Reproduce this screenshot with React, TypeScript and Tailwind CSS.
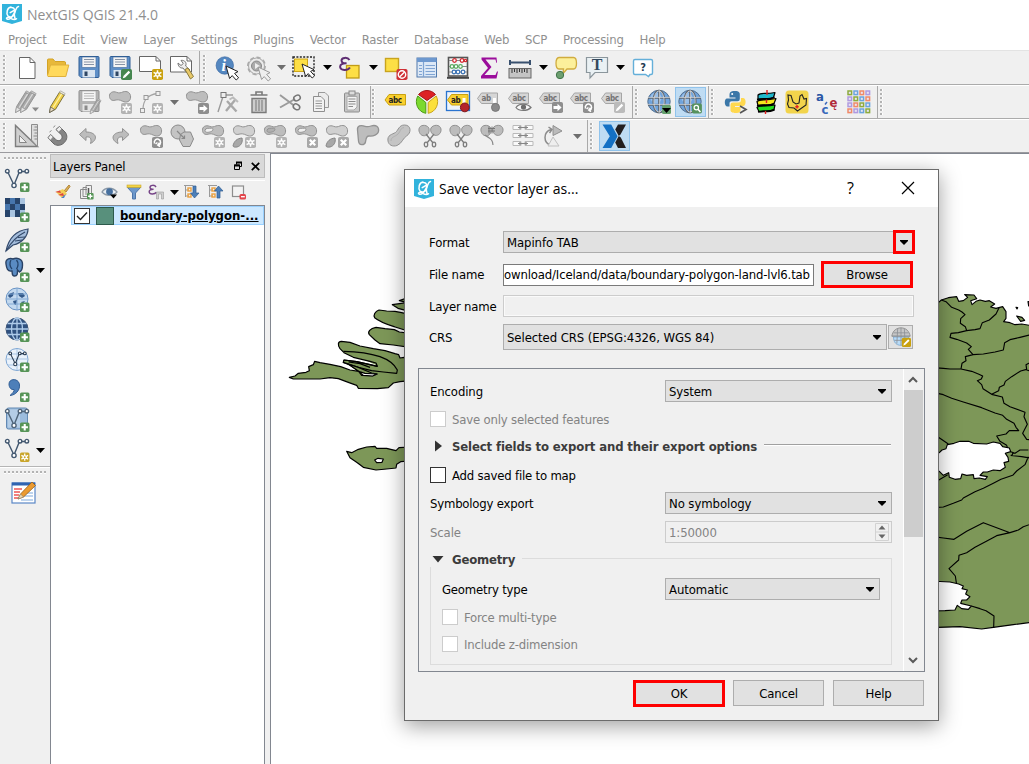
import type { ReactNode } from 'react'

type Kids = { children?: ReactNode }

const G = '#8a8a8a'
const L = '#c4c4c4'

/* ---------- shared icon parts ---------- */

function Icon({ children, w = 'w-[31px]' }: Kids & { w?: string }) {
  return (
    <div className={`flex shrink-0 justify-center ${w}`}>
      <svg width="24" height="24" viewBox="0 0 24 24" className="overflow-visible" fill="none">
        {children}
      </svg>
    </div>
  )
}

function Down({ gray = false }: { gray?: boolean }) {
  return (
    <div className="flex w-[15px] shrink-0 justify-center">
      <svg width="9" height="5" viewBox="0 0 9 5">
        <path d="M0 0H9L4.5 5Z" fill={gray ? '#6e6e6e' : '#000'} />
      </svg>
    </div>
  )
}

function Badge({ kind, fill = '#8e8e8e', x = 13, y = 13, s = 1 }: { kind: string; fill?: string; x?: number; y?: number; s?: number }) {
  return (
    <g transform={`translate(${x} ${y}) scale(${s})`}>
      <rect x="0" y="0" width="11" height="11" rx="1.8" fill={fill} />
      {kind === 'plus' && <path d="M5.5 1.8V9.2M1.8 5.5H9.2" stroke="#fff" strokeWidth="2.4" />}
      {kind === 'star' && (
        <>
          <path d="M5.5 1.3V9.7M1.6 3.3L9.4 7.7M9.4 3.3L1.6 7.7" stroke="#fff" strokeWidth="1.5" />
          <circle cx="5.5" cy="5.5" r="2.4" fill="#fff" />
          <circle cx="5.5" cy="5.5" r="1.1" fill={fill} />
        </>
      )}
      {kind === 'x' && <path d="M2.8 2.8L8.2 8.2M8.2 2.8L2.8 8.2" stroke="#fff" strokeWidth="2.3" />}
      {kind === 'arrow' && <path d="M1.5 4H5.5V1.8L9.6 5.5L5.5 9.2V7H1.5Z" fill="#fff" />}
      {kind === 'rot' && (
        <path d="M2.5 6.5C1.5 3 4.5 1.6 6.5 2.3C9.5 3.4 9 7.6 6.6 8M7.5 5.8L5.8 8L8 9.6M5.4 5.5L3.6 7" stroke="#fff" strokeWidth="1.5" />
      )}
      {kind === 'pen' && <path d="M1.8 9.3L2.6 6.8L7.6 1.8L9.2 3.4L4.2 8.4Z" fill="#fff" />}
      {kind === 'zoom' && (
        <>
          <circle cx="4.8" cy="4.6" r="2.4" stroke="#fff" strokeWidth="1.4" />
          <path d="M6.6 6.4L9.4 9.4" stroke="#fff" strokeWidth="1.8" />
        </>
      )}
    </g>
  )
}

const Cursor = ({ x = 11, y = 10, gray = false }: { x?: number; y?: number; gray?: boolean }) => (
  <path
    transform={`translate(${x} ${y})`}
    d="M0 0L3.6 12.5L6.2 9.6L10.2 14L12.6 11.8L8.6 7.4L12 5.6Z"
    fill={gray ? '#eee' : '#fff'}
    stroke={gray ? '#9a9a9a' : '#222'}
    strokeWidth="1"
  />
)

const Blob = ({ light = false }: { light?: boolean }) => (
  <path
    d="M1.5 6.5C1 2.6 5 .8 8.5 2.3C11 3.4 13 2.8 15 1.9C19 .5 22.6 2.6 22.6 7C22.6 11.5 18.5 13.3 14.5 11.2C11.5 9.8 10 9.4 7 10.2C4 11 1.8 9.6 1.5 6.5Z"
    fill={light ? '#d0d0d0' : '#bdbdbd'}
    stroke="#929292"
  />
)

const Ring = ({ fill = '#f0f0f0' }: { fill?: string }) => (
  <path d="M4 6.4C4.4 3.8 7.4 4.3 10.5 4.2C12.5 4.1 12.3 6.5 10.6 7.3C8 8.5 4 9.2 4 6.4Z" fill={fill} stroke="#929292" />
)

const SmallPart = () => <path d="M1 22C2 17 5 14.5 10 14C11 18 9 22 5 23C3 23.3 1.5 23.2 1 22Z" fill="#a8a8a8" stroke="#858585" />

const Floppy = ({ gray = false }: { gray?: boolean }) => (
  <g>
    <path d="M2 1.5Q2 .5 3 .5H21Q22 .5 22 1.5V20.5Q22 21.5 21 21.5H4L2 19.5Z" fill={gray ? '#b4b4b4' : '#5f8fc7'} stroke={gray ? '#8e8e8e' : '#2f5c94'} />
    <rect x="5" y="1" width="14" height="10.5" fill="#f4f4f4" stroke={gray ? '#a0a0a0' : '#3d6699'} strokeWidth=".6" />
    <path d="M7 3.5H17M7 6H17M7 8.5H17" stroke={gray ? '#b9b9b9' : '#8793a6'} />
    <rect x="5.5" y="14" width="12.5" height="7.5" fill={gray ? '#e4e4e4' : '#d9e4f0'} />
    <rect x="7.5" y="15.5" width="3" height="4.5" fill={gray ? '#8b8b8b' : '#2f4664'} />
  </g>
)

const Pencil = ({ gray = false, dx = 0 }: { gray?: boolean; dx?: number }) => (
  <g transform={`translate(${dx} 0)`}>
    <path d="M4.5 22.5L5.6 16.5L14.5 2.2L19.3 5L10.5 19.3Z" fill={gray ? '#a9a9a9' : '#f0d04a'} stroke={gray ? '#8d8d8d' : '#6f6430'} strokeWidth=".9" />
    <path d="M8 17.8L16.8 3.6" stroke={gray ? '#dcdcdc' : '#fff3a5'} strokeWidth="1.2" />
    <path d="M4.5 22.5L5.5 17L9.6 19.5Z" fill={gray ? '#e3e3e3' : '#e9dcc0'} stroke={gray ? '#999' : '#555'} strokeWidth=".7" />
    <path d="M14.4 2.2L15.5 .8L20.2 3.6L19.3 5Z" fill={gray ? '#c9c9c9' : '#f4f0dd'} stroke="#8a8a8a" strokeWidth=".6" />
  </g>
)

const Label = ({ yellow = false, short = false }: { yellow?: boolean; short?: boolean }) => (
  <g>
    <path d={yellow ? 'M1 12L5 6.5H21.5V17H5Z' : 'M.5 8.5L4.5 3H20.5V13.5H4.5Z'} fill={yellow ? '#f9d02e' : '#d6d6d6'} stroke={yellow ? '#c9a110' : '#a5a5a5'} />
    <text x="4.4" y={yellow ? 14.8 : 11.3} className="font-['DejaVu_Sans_Condensed',sans-serif] text-[8px] font-bold tracking-[-0.3px]" fill={yellow ? '#222' : '#737373'}>
      {short ? 'ab' : 'abc'}
    </text>
  </g>
)

const Globe = ({ main = '#4d86c6', line = '#fff', r = 11 }: { main?: string; line?: string; r?: number }) => (
  <g>
    <circle cx="12" cy="12" r={r} fill={main} stroke="#3e5678" strokeWidth="1" />
    <g stroke={line} strokeWidth="1.3">
      <ellipse cx="12" cy="12" rx={r * 0.5} ry={r} />
      <path d={`M12 ${12 - r}V${12 + r}M${12 - r} 12H${12 + r}M${12 - r * 0.86} ${12 - r * 0.5}H${12 + r * 0.86}M${12 - r * 0.86} ${12 + r * 0.5}H${12 + r * 0.86}`} />
    </g>
  </g>
)

const WebGlobe = () => (
  <g>
    <circle cx="12" cy="11.5" r="11.2" fill="#6fa3dc" stroke="#56718f" />
    <circle cx="9" cy="8" r="5.5" fill="#a9cbef" opacity=".7" />
    <g stroke="#5d656f" strokeWidth="1.7">
      <ellipse cx="12" cy="11.5" rx="5.8" ry="11" />
      <path d="M12 .5V22.5M1 8H23M1 15H23" />
    </g>
    <g stroke="#e6e6e6" strokeWidth=".7">
      <ellipse cx="12" cy="11.5" rx="5.2" ry="10.6" />
      <path d="M12.6 .5V22.5M1 7.4H23M1 14.4H23" />
    </g>
  </g>
)

const VNodes = ({ c = '#42576f' }: { c?: string }) => (
  <g stroke={c} strokeWidth="1.4" fill="#fff">
    <path d="M2.5 3.5L9 17L14.5 3.5H21.5" fill="none" />
    <circle cx="2.3" cy="3.2" r="1.8" />
    <circle cx="15" cy="3.2" r="1.8" />
    <circle cx="21.8" cy="3.2" r="1.8" />
    <circle cx="9" cy="17.5" r="2.1" />
  </g>
)

const Scissors = () => (
  <g stroke="#7d7d7d" strokeWidth="1.3">
    <path d="M8 10L15 19M16 10L9 19" />
    <ellipse cx="8" cy="20.5" rx="1.7" ry="2.3" fill="#eee" />
    <ellipse cx="16" cy="20.5" rx="1.7" ry="2.3" fill="#eee" />
  </g>
)

const TwoLobes = () => (
  <g fill="#bcbcbc" stroke="#929292">
    <path d="M1 7C0 1.5 6 0 9.5 2.5C12 4 11.5 9 9 11C5 13 2 11 1 7Z" />
    <path d="M13 4C15 .5 22 0 23 5C23.6 10 19 12.5 16 11C13.5 9.8 12 7 13 4Z" />
  </g>
)

function QLogo() {
  return (
    <svg width="20" height="20" viewBox="0 0 20 20" fill="none">
      <path d="M0 0H20V17L10 20L0 17Z" fill="#32b3dc" />
      <g stroke="#fff" strokeWidth="1.5" strokeLinecap="round">
        <path d="M9 3C5 3.5 4 9.5 6 12C9 14.4 13 12 13 7.5C13 4.4 11 2.8 8 3.6" />
        <path d="M16.5 2.5C14 2.8 14.2 6 12.2 9C10.5 12 9 15.6 5.6 15.2C3 14.5 5.5 12.6 7.5 13.6C10 15 12 17 14.5 14.8M8.2 8.6L12 6.5M12 9.5L13 14.5" />
      </g>
    </svg>
  )
}

/* ---------- toolbar scaffolding ---------- */

function Handle({ w = 'w-[11.5px]' }: { w?: string }) {
  return (
    <div className={`flex h-[26px] shrink-0 justify-end pr-[5.5px] ${w}`}>
      <svg width="3" height="26" viewBox="0 0 3 26">
        {[0, 4, 8, 12, 16, 20, 24].map((y) => (
          <g key={y}>
            <rect x="1" y={y} width="2" height="2" fill="#fff" />
            <rect x="0" y={y} width="2" height="2" fill="#b3b3b3" />
          </g>
        ))}
      </svg>
    </div>
  )
}

function Sep({ m = 'ml-px' }: { m?: string }) {
  return <div className={`w-px shrink-0 self-stretch bg-[#a9a9a9] ${m}`} />
}

function MainToolbar() {
  return (
    <div className="flex h-[35px] items-center border-t border-b border-t-[#e3e3e3] border-b-[#ababab]">
      <Handle />
      <Icon><path d="M4.5 1.5H15L20 6.5V22.5H4.5Z" fill="#fff" stroke="#666" /><path d="M15 1.5V6.5H20" stroke="#666" /></Icon>
      <Icon><path d="M1.5 19V4Q1.5 3 2.5 3H7L9 5.5H18.5Q19.5 5.5 19.5 7V9" fill="#e8b83a" stroke="#d3a326" /><path d="M1.5 19.5L4.5 9H22.8L19.8 20.5H2Z" fill="#ffd95c" stroke="#dfb03b" /></Icon>
      <Icon><Floppy /></Icon>
      <Icon><Floppy /><Badge kind="pen" fill="#45864f" /></Icon>
      <Icon><path d="M.5 .5H17L21.5 5V15.5H.5Z" fill="#fff" stroke="#666" /><path d="M17 .5V5H21.5" stroke="#666" /><Badge kind="star" fill="#c9a10f" /></Icon>
      <Icon>
        <path d="M.5 .5H17L21.5 5V16H.5Z" fill="#fff" stroke="#666" /><path d="M17 .5V5H21.5" stroke="#666" />
        <path d="M8 7L11 9.5L13.3 7.5L11 4.4C15 3.8 17 7 15.6 10L20 14L16.5 16.5L13 12C10 12.5 8 10 8 7Z" fill="#eee" stroke="#777" />
        <path d="M15 13.5L18 12L23.5 20.5L20.5 23Z" fill="#e9c969" stroke="#8a7a3c" />
      </Icon>
      <Sep />
      <Handle w="w-[12px]" />
      <Icon>
        <circle cx="9.8" cy="9.5" r="8.7" fill="#5487c0" stroke="#3d6ca5" strokeWidth=".7" />
        <text x="6.5" y="15" className="font-['Liberation_Serif',serif] text-[16px] font-bold italic" fill="#fff">i</text>
        <Cursor />
      </Icon>
      <Icon>
        <circle cx="10.5" cy="10" r="8.2" fill="#e9e9e9" stroke="#aaa" strokeWidth="2.5" strokeDasharray="4 2.4" />
        <circle cx="10.5" cy="10" r="8" fill="#ebebeb" stroke="#a9a9a9" />
        <circle cx="10.5" cy="10" r="5" fill="#ababab" stroke="#888" /><path d="M9 7L14 10L9 13Z" fill="#eee" />
        <Cursor x={12} y={11} gray />
      </Icon>
      <Down gray />
      <Icon>
        <rect x="1" y="1" width="21" height="19" stroke="#222" strokeWidth="1.4" strokeDasharray="2 1.4" />
        <rect x="2.5" y="3" width="13" height="12.5" fill="#fddf45" stroke="#cda61a" /><Cursor x={10} y={8} />
      </Icon>
      <Down />
      <Icon>
        <rect x="8.5" y="9.5" width="12.5" height="12.5" fill="#fddf45" stroke="#c19c16" strokeWidth="1.3" />
        <path d="M11.5 4C9.5 .8 3.5 1.4 3.5 4.6C3.5 7 6 7.5 8.5 7.2C4.5 7 2 8.4 2.1 11C2.5 14.6 9.5 15 12 11.5" stroke="#5e2d72" strokeWidth="2" />
      </Icon>
      <Down />
      <Icon>
        <rect x="1.5" y="2.5" width="13" height="13" fill="#fddf45" stroke="#c9a41e" strokeWidth="1.4" />
        <rect x="12.5" y="13" width="11" height="11" rx="1.8" fill="#cf2f35" /><circle cx="18" cy="18.5" r="3.7" stroke="#fff" strokeWidth="1.4" /><path d="M15.5 21L20.6 16" stroke="#fff" strokeWidth="1.4" />
      </Icon>
      <Icon>
        <rect x="2" y="2" width="19.5" height="19" fill="#dce8f6" stroke="#5079ac" /><rect x="2" y="2" width="19.5" height="4" fill="#6d98cf" />
        <path d="M8.5 6V21M4 9.5H7M4 12.5H7M4 15.5H7M4 18.5H7M10.5 9.5H20M10.5 12.5H20M10.5 15.5H20M10.5 18.5H20" stroke="#7fa4d3" strokeWidth="1.2" />
      </Icon>
      <Icon>
        <rect x="2.5" y="1.5" width="19" height="18.5" fill="#f7f7f7" stroke="#555" strokeWidth="1.6" />
        <path d="M3 4.5H21M3 10.5H21M3 16H21" stroke="#888" /><path d="M1 21.8H23" stroke="#444" strokeWidth="2" />
        <g fill="#fff" strokeWidth="1.3"><g stroke="#d22d33"><circle cx="8.5" cy="4.5" r="1.8" /><circle cx="16" cy="4.5" r="1.8" /><circle cx="19.5" cy="4.5" r="1.2" /></g><g stroke="#5daa62"><circle cx="6" cy="10.5" r="1.8" /><circle cx="10" cy="10.5" r="1.8" /><circle cx="14.5" cy="10.5" r="1.8" /></g><g stroke="#3f75b5"><circle cx="8" cy="16" r="1.8" /><circle cx="12" cy="16" r="1.8" /><circle cx="17" cy="16" r="1.8" /></g></g>
      </Icon>
      <Icon><path d="M19.3 6.8L18.5 3.5H8.5L14.5 11L7.5 19H18.5L20 15.5H21L19.5 22.5H4V20L11 12L4.5 3.5V1.5H19.5L20 6.8Z" fill="#9b0d9b" /></Icon>
      <Icon>
        <path d="M2 6.5H22M2 4V9M22 4V9" stroke="#39516f" strokeWidth="2" />
        <rect x="1" y="12.5" width="22" height="9.5" fill="#c4c4c4" stroke="#666" /><path d="M4 13V17M6.5 13V16M9 13V17M11.5 13V16M14 13V17M16.5 13V16M19 13V17" stroke="#333" />
      </Icon>
      <Down />
      <Icon>
        <path d="M5 1.5H19.5C23.5 1.5 23.5 13 19.5 13H13L9 17.5L9.5 13H5C1 12.8 1 1.8 5 1.5Z" fill="#fcf09b" stroke="#d0ac3f" strokeWidth="1.3" />
        <circle cx="6" cy="19" r="3.7" fill="#6c9e6f" stroke="#41744a" />
      </Icon>
      <Icon>
        <path d="M1.5 1.5H22.5V16.5H10L5 22V16.5H1.5Z" fill="#eaf1f4" stroke="#8b969c" strokeWidth="1.2" />
        <text x="6.7" y="14.3" className="font-['Liberation_Serif',serif] text-[16px] font-bold" fill="#34495e">T</text>
      </Icon>
      <Down />
      <Icon>
        <path d="M4 3.5H20Q21.5 3.5 21.5 5V17Q21.5 18.5 20 18.5H19L17.5 20.5L14.5 18.5H4Q2.5 18.5 2.5 17V5Q2.5 3.5 4 3.5Z" fill="#fff" stroke="#64afd9" strokeWidth="1.4" />
        <text x="9.2" y="15" className="font-['DejaVu_Sans_Condensed',sans-serif] text-[11px] font-bold" fill="#243b53">?</text>
      </Icon>
    </div>
  )
}

function EditToolbar() {
  return (
    <div className="flex h-[34px] items-center border-t border-b border-t-white border-b-[#ababab]">
      <Handle />
      <Icon><Pencil gray dx={-4} /><Pencil gray dx={1} /><path d="M17 17.5H24L20.5 21.5Z" fill="#8a8a8a" /></Icon>
      <Icon><Pencil dx={-1} /></Icon>
      <Icon><Floppy gray /><g transform="translate(10 8) scale(.7)"><Pencil gray /></g></Icon>
      <Icon><Blob /><Badge kind="star" fill="#b3b3b3" /></Icon>
      <Icon>
        <path d="M4 20C4 10 8 5 18 3.5" stroke="#a4a4a4" strokeWidth="1.3" />
        <g fill="#eee" stroke="#9a9a9a"><rect x="1.5" y="18.5" width="4" height="4" /><rect x="5" y="5.5" width="4" height="4" /><rect x="17" y="1.5" width="4" height="4" /></g>
        <Badge kind="star" fill="#b3b3b3" />
      </Icon>
      <Down gray />
      <Icon><Blob /><Badge kind="arrow" /></Icon>
      <Icon>
        <path d="M2 22L7.5 5M9 5H17" stroke="#9a9a9a" strokeWidth="1.4" /><rect x="5" y="2.5" width="5" height="5" fill="#eee" stroke="#777" />
        <path d="M11 11L20.5 21.5M19 10L10 21" stroke="#a8a8a8" strokeWidth="2.4" /><path d="M13.5 9.5L17 7.5L22 12" stroke="#bbb" strokeWidth="2" />
      </Icon>
      <Icon>
        <path d="M9 4.5V2H15V4.5M3.5 5H20.5" stroke="#7a7a7a" strokeWidth="1.6" /><path d="M5 8.5H19V22.5H5Z" fill="#cdcdcd" stroke="#7a7a7a" strokeWidth="1.4" /><path d="M9 10V21M12 10V21M15 10V21" stroke="#8a8a8a" strokeWidth="1.3" />
      </Icon>
      <Icon>
        <path d="M2 5L16 15.5M2 17.5L17 9" stroke="#9b9b9b" strokeWidth="2" /><ellipse cx="19" cy="8" rx="3.4" ry="2.6" transform="rotate(-25 19 8)" stroke="#777" strokeWidth="1.5" /><ellipse cx="18.5" cy="16.8" rx="3.4" ry="2.6" transform="rotate(30 18.5 16.8)" stroke="#777" strokeWidth="1.5" />
      </Icon>
      <Icon>
        <path d="M9.5 2.5H16L19.5 6V17.5H9.5Z" fill="#ececec" stroke="#999" /><path d="M4.5 6.5H12L15.5 10V21.5H4.5Z" fill="#f2f2f2" stroke="#8f8f8f" /><path d="M6.5 11H13M6.5 13.5H13M6.5 16H13M6.5 18.5H13" stroke="#999" />
      </Icon>
      <Icon>
        <rect x="4.5" y="3" width="15" height="19" rx="1" fill="#c8c8c8" stroke="#8d8d8d" /><rect x="9" y="1" width="6" height="4" fill="#ddd" stroke="#888" /><path d="M7 6.5H17V17L14 20H7Z" fill="#f3f3f3" stroke="#aaa" /><path d="M8.5 9H15.5M8.5 11.5H15.5M8.5 14H15.5M8.5 16.5H13" stroke="#8b8b8b" />
      </Icon>
      <Sep m="ml-[2px]" />
      <Handle w="w-[10px]" />
      <Icon><g transform="translate(0 -2)"><Label yellow /></g></Icon>
      <Icon>
        <path d="M12 10.5L3.5 4.5C8 -.8 16 -.8 20.5 4.5Z" fill="#dd2225" stroke="#a31519" />
        <path d="M10.8 12.5L2.8 6C-1 13 3 22 10.8 23.3Z" fill="#7cd92f" stroke="#4f9d17" /><path d="M13.2 12.5L21.2 6C25 13 21 22 13.2 23.3Z" fill="#fbe03c" stroke="#caa61c" />
      </Icon>
      <Icon>
        <rect x=".5" y="1.5" width="23" height="19" fill="#eef4fa" stroke="#2a74d0" strokeWidth="1.3" /><g transform="translate(.5 -2)"><Label yellow short /></g>
        <path d="M18 8V14" stroke="#fff" strokeWidth="3" /><circle cx="18.8" cy="17.4" r="4.4" fill="#b5252a" stroke="#7d171b" />
      </Icon>
      <Icon><Label short /><path d="M17.5 8V13" stroke="#fff" strokeWidth="3" /><circle cx="18.5" cy="17.4" r="4" fill="#8b8b8b" stroke="#777" /></Icon>
      <Icon><Label /><path d="M8 17.5C11 13 19 13 23 17.5C19 21.5 11 21.5 8 17.5Z" fill="#f7f7f7" stroke="#777" strokeWidth="1.2" /><circle cx="15.5" cy="17.1" r="2.6" fill="#6d6d6d" /></Icon>
      <Icon><Label /><Badge kind="arrow" y={12} /></Icon>
      <Icon><Label /><Badge kind="rot" y={12} /></Icon>
      <Icon><Label /><Badge kind="pen" fill="#bbb" y={12} /></Icon>
      <Sep m="ml-[3px]" />
      <Handle w="w-[11px]" />
      <Icon><WebGlobe /><rect x="15" y="15" width="9" height="9" rx="1.5" fill="#64a06c" /><path d="M15 18H24L19.5 23Z" fill="#000" /></Icon>
      <div className="flex h-[30px] w-[31px] shrink-0 items-center border border-[#90c3ec] bg-[#bfdcf3]">
        <Icon w="w-[29px]"><WebGlobe /><Badge kind="zoom" fill="#55915d" s={0.9} x={14} y={13.5} /></Icon>
      </div>
      <Sep m="ml-[2px]" />
      <Handle w="w-[11px]" />
      <Icon>
        <path d="M12 1C7 1 6.5 3 6.5 5V7.5H12.5V8.5H4C1 8.5 1 16.5 4.5 16.5H6.5V13Q6.5 11.3 8.5 11.3H14.5Q16.8 11.3 16.8 9V4C16.8 1.5 14 1 12 1Z" fill="#3b77a8" />
        <path d="M12.5 23C17 23 17.5 21.5 17.5 19V17H12V16H20C23.5 16 23.5 8 20 8H18V10.5Q18 12.6 15.5 12.6H10Q7.5 12.6 7.5 15V20C7.5 22.3 10 23 12.5 23Z" fill="#ffd84e" />
        <circle cx="9.2" cy="4" r="1" fill="#fff" /><path d="M17 16L23 19.5L17 23" stroke="#555" strokeWidth="1.7" />
      </Icon>
      <Icon>
        <g stroke="#000" strokeWidth="1.2" strokeLinejoin="round"><path d="M3 17.5C6 14.5 10 17 21 15L20 19.5C15 22.5 10 20.5 5 21.5Z" fill="#28dd22" /><path d="M3 11.5C6 8.5 10 11 22 8.5L20 13.5C15 16.5 10 14.5 4 15.5Z" fill="#f6e81d" /><path d="M4 5C7 2 11 4.5 21 2.5L19.5 7.5C15 10 10 8 4 9.5Z" fill="#20b8cc" /></g>
        <path d="M3 9.5C9 8 15 10 20.5 7.2M3 15.8C9 14.4 15 16.5 20.5 13.5M4 21.8C9 20.6 15 22.5 20.5 19.6" stroke="#000" strokeWidth="1.8" />
        <path d="M13 0V5M12.5 9.5V13M11.5 21V24" stroke="#e02020" strokeWidth="1.4" />
      </Icon>
      <Icon><rect x=".5" y=".5" width="23" height="23" rx="3.5" fill="#f2d44c" /><path d="M3 5L6 5.5L8 12L11 14L14 13L15 6L17 4.5L19 9L21.5 8.5L21 15L12.5 21L9 18L4 17.5L2.5 14L3.5 10Z" stroke="#222" strokeWidth="1.1" /><path d="M12 15V18.5M10.3 16.8H13.7" stroke="#e32222" strokeWidth="1.4" /></Icon>
      <Icon>
        <g className="font-['DejaVu_Sans_Condensed',sans-serif] text-[13px] font-bold"><text x="0" y="10.5" fill="#2b56a5">a</text><text x="5.5" y="24" fill="#3a69ba">c</text><text x="13.5" y="17" fill="#b02a3a">ę</text></g><path d="M9 14.5L11 12" stroke="#3a69ba" strokeWidth="1.5" />
      </Icon>
      <Icon>
        {['#8cab3e', '#6ba4dc', '#f08a68', '#b09ae0', '#b09ae0', '#8cab3e', '#6ba4dc', '#f08a68', '#b09ae0', '#f08a68', '#8cab3e', '#6ba4dc', '#f08a68', '#b09ae0', '#6ba4dc', '#8cab3e'].map((c, i) => (
          <rect key={i} x={1 + (i % 4) * 6} y={1 + Math.floor(i / 4) * 6} width="3.6" height="3.6" fill="#e8e4f0" stroke={c} strokeWidth="1.5" />
        ))}
      </Icon>
      <Sep m="ml-[2px]" />
      <Handle w="w-[11px]" />
    </div>
  )
}

function DigitizeToolbar() {
  return (
    <div className="flex h-[34px] items-center border-t border-b border-t-white border-b-[#9b9b9f]">
      <Handle />
      <Icon><path d="M0.5 1.5V22.5H22.5Z" fill="#cfcfcf" stroke="#7d7d7d" strokeWidth="1.4" /><path d="M4.5 11.5V18.5H11.5Z" fill="#f0f0f0" stroke="#888" /><path d="M16.5 .5H22.5V22.5L16.5 16Z" fill="#ddd" stroke="#8d8d8d" /><path d="M19.5 3H22M18.5 6H22M19.5 9H22M18.5 12H22M19.5 15H22" stroke="#888" /></Icon>
      <Icon><path d="M4.5 10.5L9.5 15.2C13 19 18.5 14.5 15 10.5L10 5.5L13.5 2.5L19 8C25 15 15 25 8 20L2 14Z" fill="#858585" stroke="#666" /><path d="M10 5.5L13.5 2.5L16 5L12.7 8ZM4.5 10.5L7.3 13L4.5 16.3L2 13.8Z" fill="#efefef" stroke="#888" /><path d="M7.5 3.5L9 1.5M5.5 6.5L3.5 8" stroke="#888" /></Icon>
      <Icon><path d="M9 4.5L2.5 10.5L9 16.5V13C13 12.5 15 14 13.5 19.5C22 15 19 8 9 8Z" fill="#bdbdbd" stroke="#929292" /></Icon>
      <Icon><path d="M14.5 4.5L21 10.5L14.5 16.5V13C10.5 12.5 8.5 14 10 19.5C1.5 15 4.5 8 14.5 8Z" fill="#bdbdbd" stroke="#929292" /></Icon>
      <Icon><Blob /><Badge kind="rot" /></Icon>
      <Icon><circle cx="8" cy="8" r="7" fill={L} stroke={G} /><path d="M10.5 10.5L14 8H20.5L23.5 15L20 22.5H13L9.5 16Z" fill={L} stroke={G} /><path d="M7 7L14.5 14.5M11.5 14.5H14.5V11.5" stroke="#888" strokeWidth="1.2" /></Icon>
      <Icon><Blob /><Ring /><Badge kind="star" fill="#b3b3b3" /></Icon>
      <Icon><Blob light /><SmallPart /><Badge kind="star" fill="#b3b3b3" /></Icon>
      <Icon><Blob /><Ring fill="#b0b0b0" /><Badge kind="star" fill="#b3b3b3" /></Icon>
      <Icon><Blob /><Ring /><Badge kind="x" fill="#a8a8a8" /></Icon>
      <Icon><Blob light /><SmallPart /><Badge kind="x" fill="#a8a8a8" /></Icon>
      <Icon><path d="M1.5 6C1 1.5 5 .8 9 2.3C11 3 13 2.8 15 2C20 .5 23 2.6 22.6 7C22 11 17 12.5 13 12C10 12 10 15 9.5 18C8.5 21.5 3 22 2.5 17Z" fill="#bdbdbd" stroke="#929292" strokeWidth="1.3" /></Icon>
      <Icon><path d="M1 17C0 11 5 10.5 8.5 8.5C11.5 6 12 1 17.5 1C24.5 1 24.5 9 19.5 12C16 14 15 19.5 10 21.5C5.5 23 1.6 21 1 17Z" fill="#c4c4c4" stroke="#929292" /><path d="M4 17C4 12.5 8 13 11 10C14 7 13 4 17 3.6" stroke="#b0b0b0" /></Icon>
      <Icon><TwoLobes /><Scissors /></Icon>
      <Icon><TwoLobes /><Scissors /></Icon>
      <Icon><TwoLobes /><path d="M8 4.5H15M8 7H15M9 2.5V9.5M12 2.5V9.5" stroke="#777" /><path d="M5 11C8 14 13 14 13 21" stroke="#888" strokeWidth="1.2" /></Icon>
      <Icon>
        <path d="M2 1.5H10V5.5H2ZM14 1.5H22V5.5H14ZM2 9.5H10V13.5H2ZM14 9.5H22V13.5H14ZM2 17.5H10V21.5H2ZM14 17.5H22V21.5H14Z" fill="#fafafa" stroke="#b9b9b9" />
        <path d="M7 3.5H17M7 11.5H17M7 19.5H17M9 2V5M15 2V5M9 10V13M15 10V13M9 18V21M15 18V21" stroke="#858585" strokeWidth="1.2" />
      </Icon>
      <Icon><path d="M9 21C1 19 1 8 9 5.5M6.5 3L10 5.5L7.5 9" stroke="#8b8b8b" strokeWidth="1.5" /><path d="M11 1.5L20 7L11 11.5Z" fill="#bbb" stroke="#909090" /><path d="M11 13L17 22H6Z" fill="#eee" stroke="#c0c0c0" /></Icon>
      <Down gray />
      <Sep m="ml-[2px]" />
      <Handle w="w-[11px]" />
      <div className="flex h-[30px] w-[31px] shrink-0 items-center border border-[#90c3ec] bg-[#bfdcf3]">
        <Icon w="w-[29px]"><path d="M16 .5H24L18.5 10.5L16.8 12L13.2 5.5ZM18.8 13.5L24 24H16L13.2 18.5L16.8 12Z" fill="#231f20" /><path d="M.5 .5H9.2L15.6 12.2L9.2 24H.5L7.8 12.2Z" fill="#1470c4" /></Icon>
      </div>
    </div>
  )
}

/* ---------- left bar ---------- */

const HDots = () => (
  <svg width="43" height="3" viewBox="0 0 43 3">
    {[0, 4, 8, 12, 16, 20, 24, 28, 32, 36, 40].map((x) => (
      <g key={x}><rect x={x} y="1" width="2" height="2" fill="#fff" /><rect x={x} y="0" width="2" height="2" fill="#b3b3b3" /></g>
    ))}
  </svg>
)

function SideRow({ children, arrow = false }: Kids & { arrow?: boolean }) {
  return (
    <div className="flex h-[30px] items-center pl-[2px]">
      <Icon w="w-[30px]">{children}</Icon>
      {arrow && <div className="ml-px flex"><Down /></div>}
    </div>
  )
}

const PLUS = <Badge kind="plus" fill="#569457" x={15} y={14.5} s={0.86} />

function SideBar() {
  return (
    <div className="flex w-[50px] shrink-0 flex-col">
      <div className="flex h-[12px] justify-center pt-[4px]"><HDots /></div>
      <SideRow><VNodes />{PLUS}</SideRow>
      <SideRow>
        <rect x="0" y="0" width="20" height="19" fill="#a9c4e0" /><path d="M0 0H5V6H0ZM10 0H15V6H10ZM15 6H20V12H15ZM5 6H10V12H5ZM0 12H5V19H0ZM10 12H15V19H10Z" fill="#27446a" /><path d="M5 0H10V6H5ZM0 6H5V12H0ZM10 6H15V12H10Z" fill="#4776ad" />{PLUS}
      </SideRow>
      <SideRow><path d="M1 23C3 13 8 3 23 1C23 7 18 15 8 17Z" fill="#a4bddc" stroke="#33496a" strokeWidth="1.2" /><path d="M1 23C5 16 10 9 20 4M13 9.5L20 9M10 13L17 12" stroke="#33496a" strokeWidth="1.2" />{PLUS}</SideRow>
      <SideRow arrow>
        <path d="M1 6C0 0 6 0 8 1C11 -.5 18 0 17.5 7C17.5 10 16.5 13 14.5 14L12.5 12C12.5 16 12.5 18 9.5 18C6.5 18 7.5 15 7 13C2.5 14 1.5 10 1 6Z" fill="#5a8bc2" stroke="#2a4264" strokeWidth="1.4" /><path d="M6 2C4 5 5 9 7 11M11.5 2C14 5 13 9 11.5 11" stroke="#24436a" strokeWidth="1.3" />{PLUS}
      </SideRow>
      <SideRow>
        <circle cx="12" cy="11" r="11" fill="#c3d9ef" stroke="#6a94c4" /><path d="M3 8C5 4 8 5 9 4L8 8L5 10ZM13 5L18 5L20 8L17 10L14 8ZM8 13L12 12L11 17L9 16ZM16 14L20 13L18 16Z" fill="#33598a" /><path d="M1 11H23M12 0V22M3 6H21M3 16H21" stroke="#7ea6d3" strokeWidth=".9" />{PLUS}
      </SideRow>
      <SideRow><g transform="translate(0 -1)"><Globe main="#2f5180" line="#aecbea" /></g>{PLUS}</SideRow>
      <SideRow><circle cx="12" cy="11.5" r="11" fill="#eaf2fb" stroke="#7ea6d3" /><path d="M1 11H23M12 1V22M3 6H21M3 17H21" stroke="#a9c6e5" /><g transform="translate(3.5 3) scale(.75)"><VNodes c="#26384e" /></g>{PLUS}</SideRow>
      <SideRow><path d="M4 6C4 0 14 0 14.5 7C15 12 11 17 5 17.5C8 15 9.5 13 9 11.5C6 12 4 9.5 4 6Z" fill="#4d7fb9" stroke="#335f96" />{PLUS}</SideRow>
      <SideRow><rect x="1.5" y="0" width="21" height="21" rx="2" fill="#9cbcdd" stroke="#6389b3" /><rect x="3" y="1.5" width="12" height="18" fill="#c4d8ec" opacity=".6" /><VNodes c="#4f6479" />{PLUS}</SideRow>
      <SideRow arrow><VNodes /><Badge kind="star" fill="#c9a52b" x={15} y={14.5} s={0.86} /></SideRow>
      <div className="mt-px h-px bg-[#b5b5b5]" />
      <div className="flex h-[10px] justify-center border-t border-white pt-[3px]"><HDots /></div>
      <div className="flex h-[32px] items-center pl-[8px]">
        <Icon>
          <rect x="0" y="2" width="23" height="20" fill="#fff" stroke="#5b87c6" strokeWidth="1.2" /><rect x="0" y="1.5" width="23" height="3" fill="#2f63b0" /><path d="M2 8H10M2 11H8M2 14H7M2 17H7" stroke="#e55" strokeWidth="1.3" /><path d="M12 12H21M12 15H21M9 19H21" stroke="#a9c6e8" strokeWidth="1.3" />
          <path d="M6 18L8.5 13L20 1L23.5 4.5L11.5 16Z" fill="#eb9a30" stroke="#96601b" strokeWidth=".8" /><path d="M6 18L8.5 13L11.5 16Z" fill="#f1d9ac" stroke="#777" strokeWidth=".5" />
        </Icon>
      </div>
    </div>
  )
}

/* ---------- layers panel ---------- */

function Mini({ children }: Kids) {
  return (
    <svg width="16" height="16" viewBox="0 0 16 16" fill="none" className="shrink-0 overflow-visible">{children}</svg>
  )
}

function LayersPanel() {
  return (
    <div className="flex w-[215px] shrink-0 flex-col pt-px">
      <div className="flex h-[24px] items-center border border-[#bcbcbc] bg-[#d9d9d9] pl-[2px] text-black">
        <span className="grow">Layers Panel</span>
        <svg width="10" height="10" viewBox="0 0 10 10" fill="none" className="mr-[8px]"><path d="M3.5 3.5V1.5H8.5V5.5H6.5M1.5 4H6.5V8.5H1.5Z" stroke="#000" /><path d="M3 1.5H9M1 4.5H7" stroke="#000" strokeWidth="2" /></svg>
        <svg width="9" height="9" viewBox="0 0 9 9" fill="none" className="mr-[4px]"><path d="M.8 .8L8.2 8.2M8.2 .8L.8 8.2" stroke="#000" strokeWidth="1.7" /></svg>
      </div>
      <div className="mt-[2px] flex h-[25px] items-center gap-[7.5px] border-t border-white pb-[2px] pl-[5px]">
        <Mini><path d="M9 7L14 1L15 2.5L11 8Z" fill="#ddb155" stroke="#b28435" /><path d="M1 8L8 5L12 10L7 14Z" fill="#f3cf55" /><path d="M0 8L5 6.5L6 9ZM3 11L8 9L9 12Z" fill="#de4545" /><path d="M6 14L11 10L9 14Z" fill="#4c80c8" /></Mini>
        <Mini><path d="M1.5 5.5H8M1.5 5.5V14.5H8M4 3.5V12.5H10M4 3.5H8M7 1.5H12.5V10M7 1.5V11" stroke="#8a8a8a" /><path d="M9.5 9V4" stroke="#555" strokeWidth="1.5" /><Badge kind="plus" fill="#569457" x={8} y={9} s={0.6} /></Mini>
        <Mini><path d="M0 8C3 3 11 3 15 8C11 12.5 4 12.5 0 8Z" fill="#e9eef3" stroke="#8b98a6" strokeWidth="1.3" /><circle cx="7.5" cy="7.7" r="3.4" fill="#47709f" /><path d="M8 10.5H15L11.5 14.5Z" fill="#000" /></Mini>
        <Mini><path d="M1 3H15L9.5 9V15H6.5V9Z" fill="#6d98cb" stroke="#4d76aa" /><rect x="1" y="1" width="14" height="2.4" fill="#f2d345" stroke="#cba92b" strokeWidth=".6" /></Mini>
        <Mini><path d="M7 3C5.5 .5 1 1 1 3.5C1 5 3 5.5 4.5 5.3C2 5.2 0 6 .2 8C.5 10.5 5.5 10.6 7.5 8.3" stroke="#764487" strokeWidth="1.5" /><path d="M7.5 8H14.5V15H12.5V10H9.5V15H7.5Z" fill="#d0d0d0" stroke="#999" strokeWidth=".6" /></Mini>
        <div className="ml-[-6px] mr-[-5px] flex"><Down /></div>
        <Mini><path d="M1.5 1V13M0 1.5H9M2 6H5M2 12H5" stroke="#999" /><rect x="4" y="4" width="3" height="3" stroke="#eca03d" strokeWidth="1.4" /><rect x="4" y="10" width="3" height="3" stroke="#eca03d" strokeWidth="1.4" /><path d="M9 2H12V9H15L10.5 14L6.5 9H9Z" fill="#4c7fb8" stroke="#2f5d92" strokeWidth=".7" /></Mini>
        <Mini><path d="M1.5 1V13M0 1.5H9M2 6H5M2 12H5" stroke="#999" /><rect x="4" y="4" width="3" height="3" stroke="#eca03d" strokeWidth="1.4" /><rect x="4" y="10" width="3" height="3" stroke="#eca03d" strokeWidth="1.4" /><path d="M9 14H12V7H15L10.5 2L6.5 7H9Z" fill="#4c7fb8" stroke="#2f5d92" strokeWidth=".7" /></Mini>
        <Mini><rect x="1.5" y="2" width="11" height="10.5" fill="#f3f3f3" stroke="#8d8d8d" strokeWidth="1.2" /><rect x="8.5" y="10" width="6.5" height="5.5" rx="1.5" fill="#e2454b" /><path d="M10 12.7H13.8" stroke="#fff" strokeWidth="1.3" /></Mini>
      </div>
      <div className="flex grow flex-col border border-b-0 border-[#828790] bg-white">
        <div className="ml-[20px] flex h-[19px] items-center border border-[#99d1ff] bg-[#cce8ff] pl-[2px]">
          <svg width="16" height="16" viewBox="0 0 16 16" fill="none"><rect x=".5" y=".5" width="15" height="15" fill="#fff" stroke="#333" /><path d="M3 8L6.5 11.5L13 4.5" stroke="#222" strokeWidth="1.4" /></svg>
          <span className="ml-[6px] h-[18px] w-[18px] border border-[#2d5a4c] bg-[#58907c]" />
          <span className="ml-[6px] font-bold tracking-normal text-black underline">boundary-polygon-...</span>
        </div>
      </div>
    </div>
  )
}

/* ---------- map ---------- */

function MapCanvas() {
  return (
    <div className="flex min-w-0 grow border-l border-t border-[#828790] bg-white">
      <svg width="758" height="610" viewBox="271 154 758 610" fill="none" strokeLinejoin="round">
        <g transform="translate(270 270) scale(.33333)" fill="#7d9758" stroke="#000" strokeWidth="3.6">
          <path d="M410 84L388 92L410 97ZM410 98L367 104L384 115L410 122Z" />
          <path d="M420 134L395 128L375 124L350 123L327 120C315 124 309 136 314 143C325 152 345 161 370 169C385 174 396 178 420 184Z" />
          <path d="M420 190L388 186L373 179L345 176L318 172C300 175 292 186 298 194L315 210L330 221L370 225L420 232Z" />
          <path d="M58 322L75 318L85 310L108 307L118 302L116 290L130 284L134 274L150 278L180 283L212 290L240 300L266 304L240 285L220 277L222 270L240 272L222 248L210 236C202 225 204 214 214 214L240 217L270 228L310 236L345 242L375 251L386 254L390 264L402 262L420 278V332L390 335L370 339L355 353L322 356L265 355L260 346L235 337L205 326L180 323L150 327L70 327Z" />
          <path d="M222 248L250 262L280 268L318 285L322 289L300 284L260 275L222 270L214 262Z" fill="#fff" stroke="none" />
          <path d="M220 244C260 245 300 250 330 260C355 269 375 286 382 300L380 310L340 306L305 302L265 292L220 277L222 270L260 275L300 284L322 289L318 279L300 274L250 262L222 248" />
          <path d="M222 270L260 275L300 284L322 289M236 276L270 281L300 292" fill="none" />
          <path d="M234 282L265 292L305 309L322 312L308 317L275 316L266 304Z" />
          <path d="M266 304L285 310L320 312L308 318L280 316Z" fill="#fff" />
          <path d="M230 544L245 548L265 538L290 531L315 529L320 535L350 535L378 542L387 533L420 531V573L392 575L380 583L378 594L350 597L318 600L280 592L262 578L240 563Z" />
          <path d="M314 570L324 565L340 567L336 577L320 578Z" fill="#fff" />
        </g>
        <g transform="translate(900 270) scale(.33333)" stroke="#000" strokeWidth="3.4">
          <path fill="#7d9758" d="M90 100L115 98L124 90L145 83L170 80L176 94L190 92L203 82L194 74L222 75L230 86L212 92L216 104L228 94L240 90L256 94L268 92L284 102L272 111L288 115L308 110L318 125L318 145L311 155L330 158L345 164L365 162L400 168V1056L340 1064L280 1072L245 1077L180 1070L90 1073Z" />
          <path fill="#7d9758" d="M350 138L366 142L374 151L362 154ZM348 112L353 113L351 117Z" />
          <path fill="#222" d="M384 95L392 94V106L386 108Z" />
          <path d="M124 90L138 95L155 112L176 120L186 126L195 134L182 146L181 160L196 170L200 182L225 179L240 176L247 158L268 150L288 132L298 112M200 182L175 188L153 190L150 202L170 208L200 219L214 230L205 238L219 254L250 252L285 246L310 240L314 218L330 209L360 202L400 192M219 254L196 260L198 272L186 280L183 297M100 293L130 295L150 297L183 297L215 304L235 312L248 318L244 327L232 332L245 344L249 356L275 373L296 362L298 352L312 345L316 334L335 320L362 303L380 298L378 284L400 272M380 300L400 305M275 373L307 381L312 400L330 410L375 427L372 440L382 463L368 490L380 508L400 510M100 367L130 374L155 385L190 396L245 413L285 429L308 436L320 448L342 460L348 472L356 482L328 482L318 492L290 498L300 514L320 526L322 532M322 532L332 545L345 550L360 540L385 540M332 556L365 560L400 566M340 546L336 556M100 492L122 506L145 522M385 560L375 584L350 603L338 616L303 628L280 640L250 655L225 665L190 684L185 690L160 700L130 711L100 713M100 640L143 614M100 800L130 804L162 808L200 784L250 758L330 788L355 780L370 770L400 760M330 788L290 797L262 812L225 832L200 848L177 856L176 870L147 896L166 918L170 945M214 1008L240 1016L258 1022L282 1038L281 1074" />
          <path fill="#fff" d="M90 552L118 548L126 540L138 536L142 524L162 520L180 514L206 514L220 520L260 522L280 516L300 520L308 530L328 534L332 545L316 550L324 562L326 574L312 578L316 592L300 602L280 600L262 606L250 606L240 616L262 620L256 628L238 624L222 626L220 614L200 616L186 612L182 626L165 628L148 622L146 608L130 616L118 604L90 598Z" />
          <path fill="#fff" d="M90 933L150 936L176 942L190 948L186 956L202 960L197 972L210 980L200 990L186 990L182 1000L214 1008L205 1018L185 1016L172 1006L165 1020L135 1022L90 1023Z" />
        </g>
      </svg>
    </div>
  )
}

/* ---------- dialog ---------- */

const Tri = () => (
  <svg width="8" height="5" viewBox="0 0 8 5" className="mr-[5px] shrink-0"><path d="M0 0H8V1L4 5L0 1Z" fill="#000" /></svg>
)

function Combo({ text, box, red = false }: { text: string; box: string; red?: boolean }) {
  return (
    <div className={`flex shrink-0 items-center border border-[#adadad] bg-[#e1e1e1] pl-[3px] tracking-[-0.08px] ${box}`}>
      <span className="grow">{text}</span>
      {red ? (
        <span className="-mr-[2px] flex h-[24px] w-[22px] shrink-0 items-center justify-center border-[3px] border-[#fe0000]">
          <svg width="8" height="5" viewBox="0 0 8 5"><path d="M0 0H8V1L4 5L0 1Z" fill="#000" /></svg>
        </span>
      ) : (
        <Tri />
      )}
    </div>
  )
}

function Check({ label, on = false }: { label: string; on?: boolean }) {
  return (
    <div className={`flex h-[16px] items-center tracking-[-0.19px] ${on ? 'text-black' : 'text-[#838383]'}`}>
      <span className={`h-[16px] w-[16px] border bg-white ${on ? 'border-[#333]' : 'border-[#cccccc]'}`} />
      <span className="ml-[6px]">{label}</span>
    </div>
  )
}

function Button({ label, red = false, w = 'w-[91px]' }: { label: string; red?: boolean; w?: string }) {
  return (
    <button className={`flex shrink-0 items-center justify-center bg-[#e1e1e1] tracking-[-0.2px] ${w} ${red ? 'h-[27px] border-[3px] border-[#fe0000]' : 'h-[26px] border border-[#adadad]'}`}>
      {label}
    </button>
  )
}

function SaveDialog() {
  return (
    <div className="absolute left-[404px] top-[169px] flex h-[552px] w-[535px] flex-col border border-[#6b6b6b] bg-[#f0f0f0] text-black shadow-[0_5px_20px_rgba(0,0,0,0.38)]">
      <div className="flex h-[37px] shrink-0 items-center bg-white pl-[9px] font-['Open_Sans',sans-serif] text-[14px] tracking-normal">
        <QLogo />
        <span className="ml-[5px] grow">Save vector layer as...</span>
        <span className="mr-[47px] text-[16px]">?</span>
        <svg width="14" height="14" viewBox="0 0 14 14" fill="none" className="mb-px mr-[23px]"><path d="M1 1L13 13M13 1L1 13" stroke="#000" strokeWidth="1.2" /></svg>
      </div>
      <div className="mt-[23px] flex h-[24px] shrink-0 items-center pl-[24px]">
        <span className="w-[74px]">Format</span>
        <Combo text="Mapinfo TAB" box="h-[22px] w-[411px]" red />
      </div>
      <div className="mt-[7px] flex h-[27px] shrink-0 items-center pl-[24px]">
        <span className="w-[74px]">File name</span>
        <div className="flex h-[22px] w-[311px] items-center border border-[#7a7a7a] bg-white">
          <span className="whitespace-nowrap tracking-[-0.15px]">ownload/Iceland/data/boundary-polygon-land-lvl6.tab</span>
        </div>
        <div className="ml-[7px] flex"><Button label="Browse" red w="w-[92px]" /></div>
      </div>
      <div className="mt-[7px] flex h-[22px] shrink-0 items-center pl-[24px]">
        <span className="w-[74px] whitespace-nowrap tracking-[-0.2px]">Layer name</span>
        <div className="h-[22px] w-[411px] border border-[#cccccc] shadow-[inset_0_0_0_1px_#fafafa]" />
      </div>
      <div className="mt-[7px] flex h-[26px] shrink-0 items-center pl-[24px]">
        <span className="w-[74px]">CRS</span>
        <Combo text="Selected CRS (EPSG:4326, WGS 84)" box="h-[26px] w-[384px]" />
        <div className="ml-px flex h-[24px] w-[25px] items-center justify-center border border-[#adadad] bg-[#e1e1e1]">
          <svg width="20" height="20" viewBox="0 0 24 24" fill="none"><path d="M1 11C2 4 7 1 12 1C18 1 22 5 23 11Z" fill="#c6c6c6" stroke="#8a8a8a" /><path d="M3 12H21C21 18 17 22 12 22C6 22 3 18 3 12Z" fill="#b9dcf8" stroke="#7ca8d0" /><path d="M1 11H23M3 7H21M8 2L7 20M16 2L17 20M12 1V22M4 16H20" stroke="#8b9096" /><Badge kind="pen" fill="#c9a10f" x={13} y={13} /></svg>
        </div>
      </div>
      <div className="ml-[13px] mt-[18px] flex h-[304px] w-[507px] shrink-0 border border-[#828790]">
        <div className="flex w-[484px] shrink-0 flex-col pl-[11px] pt-[11px]">
          <div className="flex h-[22px] items-center"><span className="w-[235px]">Encoding</span><Combo text="System" box="h-[22px] w-[227px]" /></div>
          <div className="mt-[9px]"><Check label="Save only selected features" /></div>
          <div className="mt-[9px] flex h-[20px] items-center font-bold text-[#3c3c3c]">
            <svg width="22" height="12" viewBox="0 0 22 12"><path d="M5 .5L12 6L5 11.5Z" fill="#333" /></svg>
            <span className="whitespace-nowrap tracking-[-0.13px]">Select fields to export and their export options</span>
            <span className="-mt-[2px] ml-[7px] h-[2px] w-[127px] border-t border-[#a0a0a0] bg-white" />
          </div>
          <div className="mt-[11px]"><Check label="Add saved file to map" on /></div>
          <div className="mt-[9px] flex h-[22px] items-center"><span className="w-[235px] tracking-[-0.2px]">Symbology export</span><Combo text="No symbology" box="h-[22px] w-[227px]" /></div>
          <div className="mt-[7px] flex h-[22px] items-center text-[#838383]">
            <span className="w-[235px]">Scale</span>
            <div className="flex h-[22px] w-[227px] items-center border border-[#cccccc] pl-[3px]">
              <span className="grow">1:50000</span>
              <svg width="14" height="18" viewBox="0 0 14 18" fill="none" className="mr-[2px]"><path d="M.5 .5H13.5V17.5H.5ZM.5 9H13.5" stroke="#d2d2d2" /><path d="M3.5 6.5L7 2.5L10.5 6.5ZM3.5 11.5L7 15.5L10.5 11.5Z" fill="#666" /></svg>
            </div>
          </div>
          <div className="mt-[6px] flex h-[20px] items-center font-bold text-[#3c3c3c]">
            <svg width="22" height="12" viewBox="0 0 22 12"><path d="M2.5 3H13.5L8 9.5Z" fill="#333" /></svg>
            <span className="tracking-[-0.2px]">Geometry</span>
            <span className="-mt-[2px] ml-[7px] mr-[11px] h-px grow bg-[#dcdcdc]" />
          </div>
          <div className="-mt-[11px] flex h-[107px] w-[462px] flex-col border-r border-[#dcdcdc]">
            <div className="mt-[9px] flex grow flex-col border-b border-l border-[#dcdcdc] pl-[11px] pt-[11px]">
              <div className="flex h-[22px] items-center"><span className="w-[223px] tracking-[-0.2px]">Geometry type</span><Combo text="Automatic" box="h-[22px] w-[215px]" /></div>
              <div className="mt-[9px]"><Check label="Force multi-type" /></div>
              <div className="mt-[11px]"><Check label="Include z-dimension" /></div>
            </div>
          </div>
        </div>
        <div className="flex w-[21px] shrink-0 flex-col border-l border-white">
          <svg width="10" height="7" viewBox="0 0 10 7" fill="none" className="ml-[4px] mt-[7px]"><path d="M1 6L5 2L9 6" stroke="#5a5a5a" strokeWidth="2" /></svg>
          <div className="mt-[7px] h-[147px] w-[19px] bg-[#cdcdcd]" />
          <div className="grow" />
          <svg width="10" height="7" viewBox="0 0 10 7" fill="none" className="mb-[7px] ml-[4px]"><path d="M1 1L5 5L9 1" stroke="#5a5a5a" strokeWidth="2" /></svg>
        </div>
      </div>
      <div className="mt-[8px] flex pl-[228px]">
        <Button label="OK" red w="w-[92px]" />
        <div className="ml-[8px] flex"><Button label="Cancel" /></div>
        <div className="ml-[9px] flex"><Button label="Help" /></div>
      </div>
    </div>
  )
}

const MENU = ['Project', 'Edit', 'View', 'Layer', 'Settings', 'Plugins', 'Vector', 'Raster', 'Database', 'Web', 'SCP', 'Processing', 'Help']

export default function App() {
  return (
    <div className="relative flex h-[764px] w-[1029px] flex-col overflow-hidden bg-[#f0f0f0] font-['DejaVu_Sans_Condensed',sans-serif] text-[13px] leading-[17px] tracking-[-0.12px]">
      <header className="flex h-[29px] shrink-0 items-center bg-white pb-[2px] pl-[2px] font-['Open_Sans',sans-serif] text-[14px] tracking-[-0.05px] text-[#8f8f8f]">
        <QLogo />
        <span className="ml-[5px] pt-[2px]">NextGIS QGIS 21.4.0</span>
      </header>
      <nav className="flex h-[21px] shrink-0 items-center gap-[15.8px] bg-white pl-[8px] tracking-[-0.17px] text-[#909090]">
        {MENU.map((m) => <span key={m}>{m}</span>)}
      </nav>
      <MainToolbar />
      <EditToolbar />
      <DigitizeToolbar />
      <div className="flex min-h-0 grow">
        <SideBar />
        <LayersPanel />
        <div className="w-[5px] shrink-0" />
        <MapCanvas />
      </div>
      <SaveDialog />
    </div>
  )
}
